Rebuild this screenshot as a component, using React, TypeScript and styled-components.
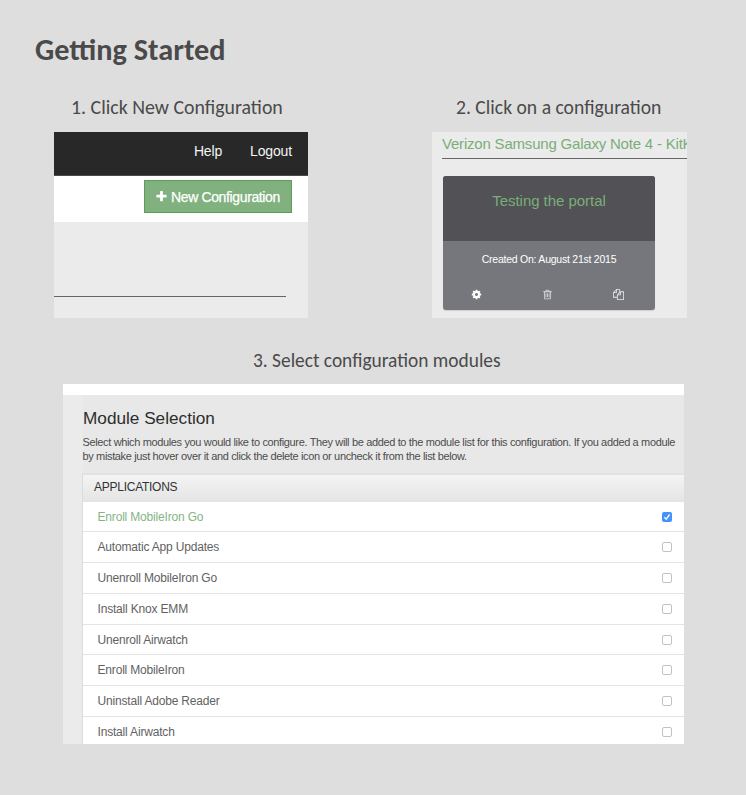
import React from "react";
import styled, { createGlobalStyle } from "styled-components";

const GlobalStyle = createGlobalStyle`
  * { box-sizing: border-box; }
  body {
    margin: 0;
    background: #dedede;
    font-family: "Liberation Sans", Arial, sans-serif;
  }
  h1, h2, h3, h4, p, ul { margin: 0; padding: 0; font-weight: 400; }
  ul { list-style: none; }
`;

const Page = styled.main`
  width: 746px;
  height: 795px;
  padding-top: 32px;
  overflow: hidden;
  background: #dedede;
  color: #4a4a4a;
`;

const Title = styled.h1`
  && { font-weight: 700; }
  margin-left: 35px;
  height: 36px;
  line-height: 36px;
  font-family: Carlito, Lato, sans-serif;
  font-size: 30.25px;
  white-space: nowrap;
`;

const Steps = styled.div`
  display: flex;
  justify-content: space-between;
  margin-top: 27px;
  padding: 0 59px 0 54px;
`;

const Step = styled.section<{ $width: number }>`
  width: ${(p) => p.$width}px;
`;

const StepTitle = styled.h2<{ $shift?: number; $size: number; $gap?: number }>`
  height: 24px;
  margin-bottom: ${(p) => p.$gap ?? 13}px;
  padding-left: ${(p) => p.$shift ?? 0}px;
  line-height: 24px;
  font-family: Carlito, Lato, sans-serif;
  font-size: ${(p) => p.$size}px;
  white-space: nowrap;
`;

const Shot = styled.div<{ $height: number }>`
  height: ${(p) => p.$height}px;
  overflow: hidden;
  background: #ebebeb;
`;

const NavBar = styled.nav`
  display: flex;
  justify-content: flex-end;
  gap: 28px;
  height: 44px;
  padding-right: 16px;
  border-bottom: 1px solid #4b4b4b;
  background: #282828;
  color: #f4f4f4;
  font-size: 14px;
  letter-spacing: -0.15px;
  line-height: 38px;
`;

const ActionBar = styled.div`
  display: flex;
  justify-content: flex-end;
  height: 46px;
  padding: 4px 16px 0 0;
  background: #fff;
`;

const GreenButton = styled.button`
  display: flex;
  align-items: center;
  justify-content: center;
  gap: 3px;
  width: 148px;
  height: 33px;
  padding: 0 1px 0 0;
  border: 1px solid #5f9c58;
  background: #80b17e;
  color: #fff;
  font-family: inherit;
  font-size: 14px;
  letter-spacing: -0.37px;
  white-space: nowrap;
  -webkit-text-stroke: 0.25px #fff;
`;

const Rule = styled.hr<{ $top: number; $left?: number; $right?: number }>`
  height: 1px;
  margin: ${(p) => `${p.$top}px ${p.$right ?? 0}px 0 ${p.$left ?? 0}px`};
  border: 0;
  background: #666669;
`;

const DeviceName = styled.h3`
  height: 26px;
  padding-left: 10px;
  line-height: 23px;
  color: #7aae79;
  font-size: 15px;
  letter-spacing: -0.2px;
  white-space: nowrap;
`;

const Card = styled.article`
  width: 212px;
  height: 134px;
  margin: 17px 0 0 11px;
  overflow: hidden;
  border-radius: 3px;
  background: #76777c;
  box-shadow: 0 1px 1px #d0d0d0;
  text-align: center;
`;

const CardHead = styled.h4`
  height: 65px;
  line-height: 49px;
  background: #515156;
  color: #7aae79;
  font-size: 15px;
  letter-spacing: -0.04px;
`;

const CardDate = styled.p`
  height: 38px;
  line-height: 37px;
  color: #fff;
  font-size: 10.5px;
  letter-spacing: -0.24px;
`;

const CardActions = styled.div`
  display: flex;
  justify-content: space-between;
  align-items: center;
  height: 30px;
  padding: 0 31px 0 28px;
`;

const Glyph = styled.svg<{ $size: number; $tone?: string }>`
  width: ${(p) => p.$size}px;
  height: ${(p) => p.$size}px;
  fill: ${(p) => p.$tone ?? "#fff"};
`;

const ModuleStep = styled.section`
  width: 621px;
  margin: 31px 0 0 63px;
`;

const WhiteStrip = styled.div`
  height: 11px;
  background: #fff;
`;

const ModulePane = styled.div`
  height: 349px;
  margin-left: 20px;
  background: linear-gradient(#e8e8e8, #e8e8e8) 0 0 / 100% 78px no-repeat;
`;

const PaneTitle = styled.h3`
  height: 40px;
  line-height: 47px;
  color: #2d2d2d;
  font-size: 17.2px;
`;

const PaneText = styled.p`
  height: 38px;
  margin-left: -0.5px;
  line-height: 14.4px;
  font-size: 11px;
  letter-spacing: -0.357px;
  color: #4c4c4c;
  white-space: nowrap;
`;

const ModulePanel = styled.div`
  margin-left: -1px;
  border-left: 1px solid #dcdcdc;
  border-top: 2px solid #e2e2e2;
  background: #fff;
`;

const PanelHead = styled.h4`
  height: 27px;
  padding-left: 11px;
  line-height: 24px;
  background: linear-gradient(#f4f4f4, #e4e4e4);
  color: #333;
  font-size: 12px;
  letter-spacing: -0.26px;
`;

const ModuleRow = styled.li<{ $on?: boolean }>`
  display: flex;
  align-items: center;
  justify-content: space-between;
  height: 30.8px;
  padding: 0 12px 0 14.5px;
  border-bottom: 1px solid #e4e4e4;
  color: ${(p) => (p.$on ? "#86b486" : "#626262")};
  font-size: 12px;
  letter-spacing: -0.18px;

  &:first-child { height: 30.3px; }
`;

const Check = styled.span<{ $on?: boolean }>`
  display: flex;
  width: 10px;
  height: 10px;
  border: ${(p) => (p.$on ? "0" : "1px solid #c2c2c2")};
  border-radius: 2px;
  background: ${(p) => (p.$on ? "#4492fb" : "#fff")};
`;

const GEAR =
  "M1152 896q0-106-75-181t-181-75-181 75-75 181 75 181 181 75 181-75 75-181zm512-109v222q0 12-8 23t-20 13l-185 28q-19 54-39 91 35 50 107 138 10 12 10 25t-9 23q-27 37-99 108t-94 71q-12 0-26-9l-138-108q-44 23-91 38-16 136-29 186-7 28-36 28h-222q-14 0-24.5-8.5t-11.5-21.5l-28-184q-49-16-90-37l-141 107q-10 9-25 9-14 0-25-11-126-114-165-168-7-10-7-23 0-12 8-23 15-21 51-66.5t54-70.5q-27-50-41-99l-183-27q-13-2-21-12.5t-8-23.5v-222q0-12 8-23t19-13l186-28q14-46 39-92-40-57-107-138-10-12-10-24 0-10 9-23 26-36 98.5-107.5t94.5-71.5q13 0 26 10l138 107q44-23 91-38 16-136 29-186 7-28 36-28h222q14 0 24.5 8.5t11.5 21.5l28 184q49 16 90 37l142-107q9-9 24-9 13 0 25 10 129 119 165 170 7 8 7 22 0 12-8 23-15 21-51 66.5t-54 70.5q26 50 41 98l183 28q13 2 21 12.5t8 23.5z";
const TRASH =
  "M704 736v576q0 14-9 23t-23 9h-64q-14 0-23-9t-9-23v-576q0-14 9-23t23-9h64q14 0 23 9t9 23zm256 0v576q0 14-9 23t-23 9h-64q-14 0-23-9t-9-23v-576q0-14 9-23t23-9h64q14 0 23 9t9 23zm256 0v576q0 14-9 23t-23 9h-64q-14 0-23-9t-9-23v-576q0-14 9-23t23-9h64q14 0 23 9t9 23zm128 724v-948h-896v948q0 22 7 40.5t14.5 27 10.5 8.5h832q3 0 10.5-8.5t14.5-27 7-40.5zm-672-1076h448l-48-117q-7-9-17-11h-317q-10 2-17 11zm928 32v64q0 14-9 23t-23 9h-96v948q0 83-47 143.5t-113 60.5h-832q-66 0-113-58.5t-47-141.5v-952h-96q-14 0-23-9t-9-23v-64q0-14 9-23t23-9h309l70-167q15-37 54-63t79-26h320q40 0 79 26t54 63l70 167h309q14 0 23 9t9 23z";
const FILES =
  "M1696 384q40 0 68 28t28 68v1216q0 40-28 68t-68 28h-960q-40 0-68-28t-28-68v-288h-544q-40 0-68-28t-28-68v-672q0-40 20-88t48-76l408-408q28-28 76-48t88-20h416q40 0 68 28t28 68v328q68-40 128-40h416zm-544 213l-299 299h299v-299zm-640-384l-299 299h299v-299zm196 647l316-316v-416h-384v416q0 40-28 68t-68 28h-416v640h512v-256q0-40 20-88t48-76zm956 804v-1152h-384v416q0 40-28 68t-68 28h-416v640h896z";
const PLUS =
  "M1600 736v192q0 40-28 68t-68 28h-416v416q0 40-28 68t-68 28h-192q-40 0-68-28t-28-68v-416h-416q-40 0-68-28t-28-68v-192q0-40 28-68t68-28h416v-416q0-40 28-68t68-28h192q40 0 68 28t28 68v416h416q40 0 68 28t28 68z";

const Icon = ({ d, size, tone }: { d: string; size: number; tone?: string }) => (
  <Glyph viewBox="0 0 1792 1792" $size={size} $tone={tone} aria-hidden>
    <path d={d} />
  </Glyph>
);

const modules = [
  { name: "Enroll MobileIron Go", on: true },
  { name: "Automatic App Updates" },
  { name: "Unenroll MobileIron Go" },
  { name: "Install Knox EMM" },
  { name: "Unenroll Airwatch" },
  { name: "Enroll MobileIron" },
  { name: "Uninstall Adobe Reader" },
  { name: "Install Airwatch" },
];

export default function App() {
  return (
    <Page>
      <GlobalStyle />
      <Title>Getting Started</Title>
      <Steps>
        <Step $width={254}>
          <StepTitle $shift={17} $size={19.85}>1. Click New Configuration</StepTitle>
          <Shot $height={186}>
            <NavBar>
              <span>Help</span>
              <span>Logout</span>
            </NavBar>
            <ActionBar>
              <GreenButton>
                <Icon d={PLUS} size={13} />
                New Configuration
              </GreenButton>
            </ActionBar>
            <Rule $top={74} $right={22} />
          </Shot>
        </Step>
        <Step $width={255}>
          <StepTitle $shift={24} $size={19.65}>2. Click on a configuration</StepTitle>
          <Shot $height={186}>
            <DeviceName>Verizon Samsung Galaxy Note 4 - KitKat</DeviceName>
            <Rule $top={0} $left={10} />
            <Card>
              <CardHead>Testing the portal</CardHead>
              <CardDate>Created On: August 21st 2015</CardDate>
              <CardActions>
                <Icon d={GEAR} size={11} />
                <Icon d={TRASH} size={11} tone="#dedee0" />
                <Icon d={FILES} size={11} tone="#ececee" />
              </CardActions>
            </Card>
          </Shot>
        </Step>
      </Steps>
      <ModuleStep>
        <StepTitle $shift={190} $size={19.4} $gap={11}>3. Select configuration modules</StepTitle>
        <Shot $height={360}>
          <WhiteStrip />
          <ModulePane>
            <PaneTitle>Module Selection</PaneTitle>
            <PaneText>
              Select which modules you would like to configure. They will be added to the module list for this configuration. If you added a module
              <br />
              by mistake just hover over it and click the delete icon or uncheck it from the list below.
            </PaneText>
            <ModulePanel>
              <PanelHead>APPLICATIONS</PanelHead>
              <ul>
                {modules.map((m) => (
                  <ModuleRow key={m.name} $on={m.on}>
                    {m.name}
                    <Check $on={m.on}>
                      {m.on && (
                        <svg width="10" height="10" viewBox="0 0 10 10" fill="none" stroke="#fff" strokeWidth="1.3">
                          <path d="M2.4 5.3 4.2 7.2 7.6 2.5" />
                        </svg>
                      )}
                    </Check>
                  </ModuleRow>
                ))}
              </ul>
            </ModulePanel>
          </ModulePane>
        </Shot>
      </ModuleStep>
    </Page>
  );
}
